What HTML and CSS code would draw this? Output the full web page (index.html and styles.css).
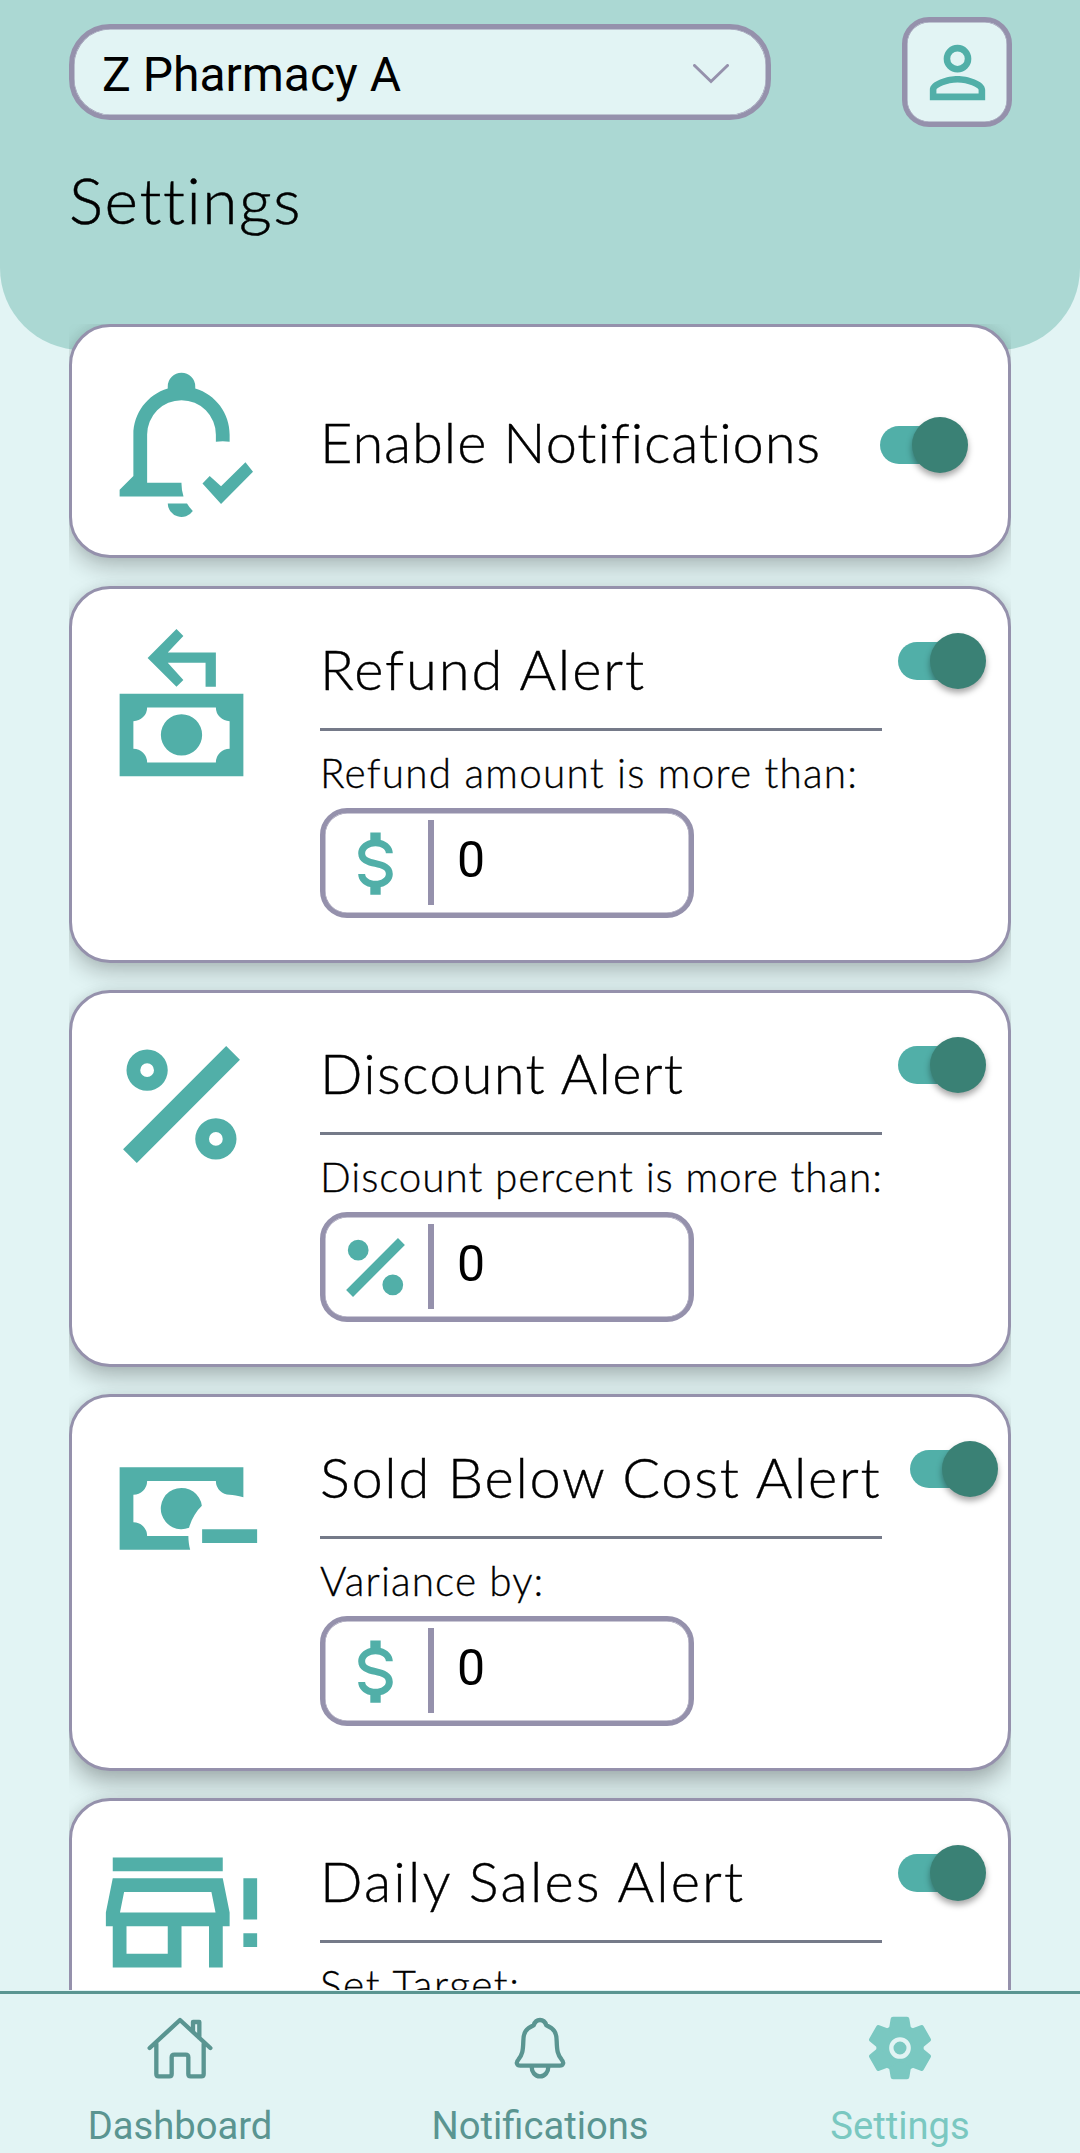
FILE: index.html
```html
<!DOCTYPE html>
<html lang="en">
<head>
    <meta charset="UTF-8">
    <meta name="viewport" content="width=device-width, initial-scale=1.0">
    <title>Settings</title>
    <link rel="stylesheet" href="styles.css">
</head>
<body>
    <div class="app">
        <header class="header">
            <div class="header-row">
                <div class="store-select">
                    <span>Z Pharmacy A</span>
                    <svg class="chevron" viewBox="0 0 36 20"><path d="M1.5 1.5L18 17.5L34.5 1.5"/></svg>
                </div>
                <div class="profile">
                    <svg class="profile-icon" viewBox="0 0 24 24"><path d="M12 4a4 4 0 1 1 0 8 4 4 0 0 1 0-8m0 1.9a2.1 2.1 0 1 0 0 4.2 2.1 2.1 0 0 0 0-4.2M12 13c2.67 0 8 1.34 8 4v3H4v-3c0-2.66 5.33-4 8-4m0 1.9c-2.97 0-6.1 1.46-6.1 2.1v1.1h12.2V17c0-.64-3.13-2.1-6.1-2.1z"/></svg>
                </div>
            </div>
            <h1 class="page-title">Settings</h1>
        </header>

        <main class="list">
            <section class="card card-single">
                <svg class="card-icon" viewBox="0 0 24 24"><path d="M12 2a2 2 0 0 0-2 2v.29C7.03 5.17 5 7.9 5 11v6l-2 2v1h9.29a6 6 0 0 1-.29-2H7v-7a5 5 0 0 1 10 0v1.05a6 6 0 0 1 2 0V11c0-3.1-2.03-5.83-5-6.71V4a2 2 0 0 0-2-2zM10 21a2 2 0 0 0 3.65 1.1A6 6 0 0 1 12.8 21zM15.05 18.1L16.1 17l1.65 1.5L21.3 15l1.1 1.4-4.65 4.7z"/></svg>
                <div class="card-body">
                    <h2 class="card-title t-enable">Enable Notifications</h2>
                </div>
                <div class="switch"><div class="thumb"></div></div>
            </section>

            <section class="card">
                <svg class="card-icon" viewBox="0 0 24 24"><path fill-rule="evenodd" d="M11.27 1.6l1 1L10 5h7v5h-1.5V6.5H10L12.27 9l-1 1-4.2-4.2zM3 11h18v12H3zM7 13a2 2 0 0 1-2 2v4a2 2 0 0 1 2 2h10a2 2 0 0 1 2-2v-4a2 2 0 0 1-2-2zM12 14a3 3 0 1 1 0 6 3 3 0 0 1 0-6z"/></svg>
                <div class="card-body">
                    <h2 class="card-title t-refund">Refund Alert</h2>
                    <p class="card-label l-refund">Refund amount is more than:</p>
                    <div class="amount">
                        <svg class="amount-icon" viewBox="0 0 24 24"><path d="M7,15H9C9,16.08 10.37,17 12,17C13.63,17 15,16.08 15,15C15,13.9 13.96,13.5 11.76,12.97C9.64,12.44 7,11.78 7,9C7,7.21 8.47,5.69 10.5,5.18V3H13.5V5.18C15.53,5.69 17,7.21 17,9H15C15,7.92 13.63,7 12,7C10.37,7 9,7.92 9,9C9,10.1 10.04,10.5 12.24,11.03C14.36,11.56 17,12.22 17,15C17,16.79 15.53,18.31 13.5,18.82V21H10.5V18.82C8.47,18.31 7,16.79 7,15Z"/></svg>
                        <div class="divider"></div>
                        <span class="amount-value">0</span>
                    </div>
                </div>
                <div class="switch"><div class="thumb"></div></div>
            </section>

            <section class="card">
                <svg class="card-icon" viewBox="0 0 24 24"><path fill-rule="evenodd" d="M18.5 3.5l2 2-15 15-2-2zM7 4a3 3 0 1 1 0 6 3 3 0 0 1 0-6zM7 6a1 1 0 1 0 0 2 1 1 0 0 0 0-2zM17 14a3 3 0 1 1 0 6 3 3 0 0 1 0-6zM17 16a1 1 0 1 0 0 2 1 1 0 0 0 0-2z"/></svg>
                <div class="card-body">
                    <h2 class="card-title t-discount">Discount Alert</h2>
                    <p class="card-label l-discount">Discount percent is more than:</p>
                    <div class="amount">
                        <svg class="amount-icon" viewBox="0 0 24 24"><path d="M18.5 3.5l2 2-15 15-2-2zM7 4a3 3 0 1 1 0 6 3 3 0 0 1 0-6zM17 14a3 3 0 1 1 0 6 3 3 0 0 1 0-6z"/></svg>
                        <div class="divider"></div>
                        <span class="amount-value">0</span>
                    </div>
                </div>
                <div class="switch"><div class="thumb"></div></div>
            </section>

            <section class="card card-wide">
                <svg class="card-icon" viewBox="0 0 24 24"><path d="M3 6h18v4.35c-.8-.2-1.5-.35-2-.35a2 2 0 0 1-2-2H7a2 2 0 0 1-2 2v4a2 2 0 0 1 2 2h6c0 .7.1 1.35.26 2H3zM14.96 11.6A3 3 0 1 0 13.1 14.79c.35-1.25 1-2.35 1.86-3.19zM15 15h8v2h-8z"/></svg>
                <div class="card-body">
                    <h2 class="card-title t-sold">Sold Below Cost Alert</h2>
                    <p class="card-label l-variance">Variance by:</p>
                    <div class="amount">
                        <svg class="amount-icon" viewBox="0 0 24 24"><path d="M7,15H9C9,16.08 10.37,17 12,17C13.63,17 15,16.08 15,15C15,13.9 13.96,13.5 11.76,12.97C9.64,12.44 7,11.78 7,9C7,7.21 8.47,5.69 10.5,5.18V3H13.5V5.18C15.53,5.69 17,7.21 17,9H15C15,7.92 13.63,7 12,7C10.37,7 9,7.92 9,9C9,10.1 10.04,10.5 12.24,11.03C14.36,11.56 17,12.22 17,15C17,16.79 15.53,18.31 13.5,18.82V21H10.5V18.82C8.47,18.31 7,16.79 7,15Z"/></svg>
                        <div class="divider"></div>
                        <span class="amount-value">0</span>
                    </div>
                </div>
                <div class="switch"><div class="thumb"></div></div>
            </section>

            <section class="card">
                <svg class="card-icon" viewBox="0 0 24 24"><path fill-rule="evenodd" d="M2 4h16v2H2zM2 7h16l1 5v2h-1v6h-2v-6h-4v6H2v-6H1v-2zM3.65 9l-.6 3h13.9l-.6-3zM4 14v4h6v-4zM21 7h2v6h-2zM21 15h2v2h-2z"/></svg>
                <div class="card-body">
                    <h2 class="card-title t-daily">Daily Sales Alert</h2>
                    <p class="card-label l-target">Set Target:</p>
                </div>
                <div class="switch"><div class="thumb"></div></div>
            </section>
        </main>

        <nav class="tabs">
            <div class="tab">
                <svg class="tab-icon line" viewBox="0 0 198 198"><path d="M8 99L99 15L190 99M28 86v91q0 7 7 7h32q7 0 7-7v-50q0-8 8-8h34q8 0 8 8v50q0 7 7 7h32q7 0 7-7V86M138 47V21h19v48"/></svg>
                <span>Dashboard</span>
            </div>
            <div class="tab">
                <svg class="tab-icon line" viewBox="0 0 198 198"><path d="M99 15C89 15 83 21 80 31C58 41 49 51 49 78C48 108 46 120 34 134C26 142 29 152 40 152H158C169 152 172 142 164 134C152 120 150 108 149 78C149 51 140 41 118 31C115 21 109 15 99 15ZM74 155c0 16 10 29 25 29s25-13 25-29"/></svg>
                <span>Notifications</span>
            </div>
            <div class="tab active">
                <svg class="tab-icon" viewBox="-99 -99 198 198">
                    <circle r="71"/>
                    <path d="M-34-52L-28-88Q-27-94-21-94H21Q27-94 28-88L34-52V52L28 88Q27 94 21 94H-21Q-27 94-28 88L-34 52z"/>
                    <path transform="rotate(60)" d="M-34-52L-28-88Q-27-94-21-94H21Q27-94 28-88L34-52V52L28 88Q27 94 21 94H-21Q-27 94-28 88L-34 52z"/>
                    <path transform="rotate(120)" d="M-34-52L-28-88Q-27-94-21-94H21Q27-94 28-88L34-52V52L28 88Q27 94 21 94H-21Q-27 94-28 88L-34 52z"/>
                    <circle class="gear-ring" r="26"/>
                </svg>
                <span>Settings</span>
            </div>
        </nav>
    </div>
</body>
</html>
```

FILE: styles.css
```css
* {
    box-sizing: border-box;
}
body {
    margin: 0;
    background-color: #e2f4f4;
    font-family: Roboto, sans-serif;
    color: #000;
}
svg {
    display: block;
    flex-shrink: 0;
}
.app {
    height: 2153px;
    display: flex;
    flex-direction: column;
    overflow: hidden;
}

/* header */
.header {
    height: 350px;
    flex-shrink: 0;
    padding: 17px 68px 0 69px;
    background-color: #abd8d3;
    border-radius: 0 0 82px 82px;
}
.header-row {
    display: flex;
    justify-content: space-between;
    align-items: center;
}
.store-select {
    width: 702px;
    height: 96px;
    padding: 5px 37px 0 28px;
    display: flex;
    justify-content: space-between;
    align-items: center;
    border: 5px solid #9591ac;
    border-radius: 41px;
    background-color: #e2f4f4;
    box-shadow: inset 0 0 0 0.5px #9591ac;
    font-size: 48px;
}
.chevron {
    width: 36px;
    height: 20px;
    margin-bottom: 2px;
    fill: none;
    stroke: #9591ac;
    stroke-width: 3;
    stroke-linecap: round;
}
.profile {
    width: 110px;
    height: 110px;
    display: flex;
    justify-content: center;
    align-items: center;
    border: 5px solid #9591ac;
    border-radius: 27px;
    background-color: #e2f4f4;
    box-shadow: inset 0 0 0 0.5px #9591ac;
}
.profile-icon {
    width: 83px;
    height: 83px;
    fill: #51afa8;
}
.page-title {
    margin: 33px 0 0;
    font-family: Lato, sans-serif;
    font-size: 64px;
    font-weight: 300;
    line-height: 80px;
    letter-spacing: 1.6px;
    -webkit-text-stroke: 0.5px #000;
}

/* cards */
.list {
    height: 1666px;
    flex-shrink: 0;
    margin: -26px 69px 1px;
    overflow: hidden;
}
.card {
    height: 377px;
    margin-bottom: 27px;
    padding: 29px 0 0 27px;
    display: flex;
    align-items: flex-start;
    border: 3px solid #9591ac;
    border-radius: 41px;
    background-color: #fff;
    box-shadow: 0 10px 22px rgba(0, 0, 0, 0.22), 0 0 12px rgba(0, 0, 0, 0.07);
}
.card:nth-child(3) {
    box-shadow: 0 11px 22px rgba(0, 0, 0, 0.24), 0 0 12px rgba(0, 0, 0, 0.07);
}
.card:nth-child(4) {
    box-shadow: 0 13px 22px rgba(0, 0, 0, 0.26), 0 0 12px rgba(0, 0, 0, 0.07);
}
.card-single {
    height: 234px;
    margin-bottom: 28px;
    padding-top: 0;
    align-items: center;
}
.card-icon {
    width: 165px;
    height: 165px;
    fill: #51afa8;
}
.card-body {
    width: 562px;
    flex-shrink: 0;
    margin: 13px 0 0 56px;
    white-space: nowrap;
}
.card-title {
    height: 100px;
    margin: 0;
    border-bottom: 3px solid #757a89;
    font-family: Lato, sans-serif;
    font-size: 56px;
    font-weight: 300;
    line-height: 76px;
    -webkit-text-stroke: 0.4px #000;
}
.card-label {
    margin: 17px 0 10px;
    font-family: Lato, sans-serif;
    font-size: 40.5px;
    font-weight: 300;
    line-height: 50px;
    -webkit-text-stroke: 0.3px #000;
}
.t-enable {
    letter-spacing: 0.9px;
}
.t-refund {
    letter-spacing: 1.9px;
}
.t-discount {
    letter-spacing: 1.3px;
}
.t-sold {
    letter-spacing: 1.7px;
}
.t-daily {
    letter-spacing: 2.2px;
}
.l-refund {
    letter-spacing: 1.22px;
}
.l-discount {
    letter-spacing: 0.9px;
}
.l-variance {
    letter-spacing: 1.1px;
}
.l-target {
    letter-spacing: 1.6px;
}
.amount {
    width: 374px;
    height: 110px;
    padding-left: 9px;
    display: flex;
    align-items: center;
    border: 5px solid #9591ac;
    border-radius: 27px;
    box-shadow: inset 0 0 0 0.5px #9591ac;
}
.amount-icon {
    width: 83px;
    height: 83px;
    fill: #51afa8;
}
.divider {
    width: 6px;
    height: 85px;
    margin: 0 0 1px 11px;
    background-color: #9591ac;
}
.amount-value {
    margin-left: 23px;
    padding-bottom: 7px;
    font-size: 50px;
}
.switch {
    width: 88px;
    height: 38px;
    margin: 24px 0 0 16px;
    display: flex;
    justify-content: flex-end;
    align-items: center;
    background: linear-gradient(#51afa8, #51afa8) no-repeat;
    background-size: 70px 38px;
    border-radius: 19px;
}
.thumb {
    width: 56px;
    height: 56px;
    flex-shrink: 0;
    border-radius: 50%;
    background-color: #3a8175;
    box-shadow: 0 4px 6px rgba(0, 0, 0, 0.35);
}
.card-wide .switch {
    margin-left: 28px;
}
.card-single .card-body {
    width: 544px;
    margin-top: 2px;
}
.card-single .card-title {
    height: auto;
    border-bottom: none;
}
.card-single .switch {
    margin-top: 8px;
}

/* bottom tabs */
.tabs {
    height: 162px;
    flex-shrink: 0;
    display: flex;
    border-top: 3px solid #5a9591;
}
.tab {
    flex: 1;
    padding-top: 21px;
    display: flex;
    flex-direction: column;
    align-items: center;
    color: #5a9591;
    font-size: 38.2px;
    line-height: 46px;
}
.tab span {
    margin-top: 22px;
}
.tab-icon {
    width: 66px;
    height: 66px;
    fill: #7ac8c1;
}
.tab-icon.line {
    fill: none;
    stroke: #5a9591;
    stroke-width: 13;
    stroke-linecap: round;
    stroke-linejoin: round;
}
.gear-ring {
    stroke: #e2f4f4;
    stroke-width: 13;
}
.tab.active {
    color: #7ac8c1;
}
```
